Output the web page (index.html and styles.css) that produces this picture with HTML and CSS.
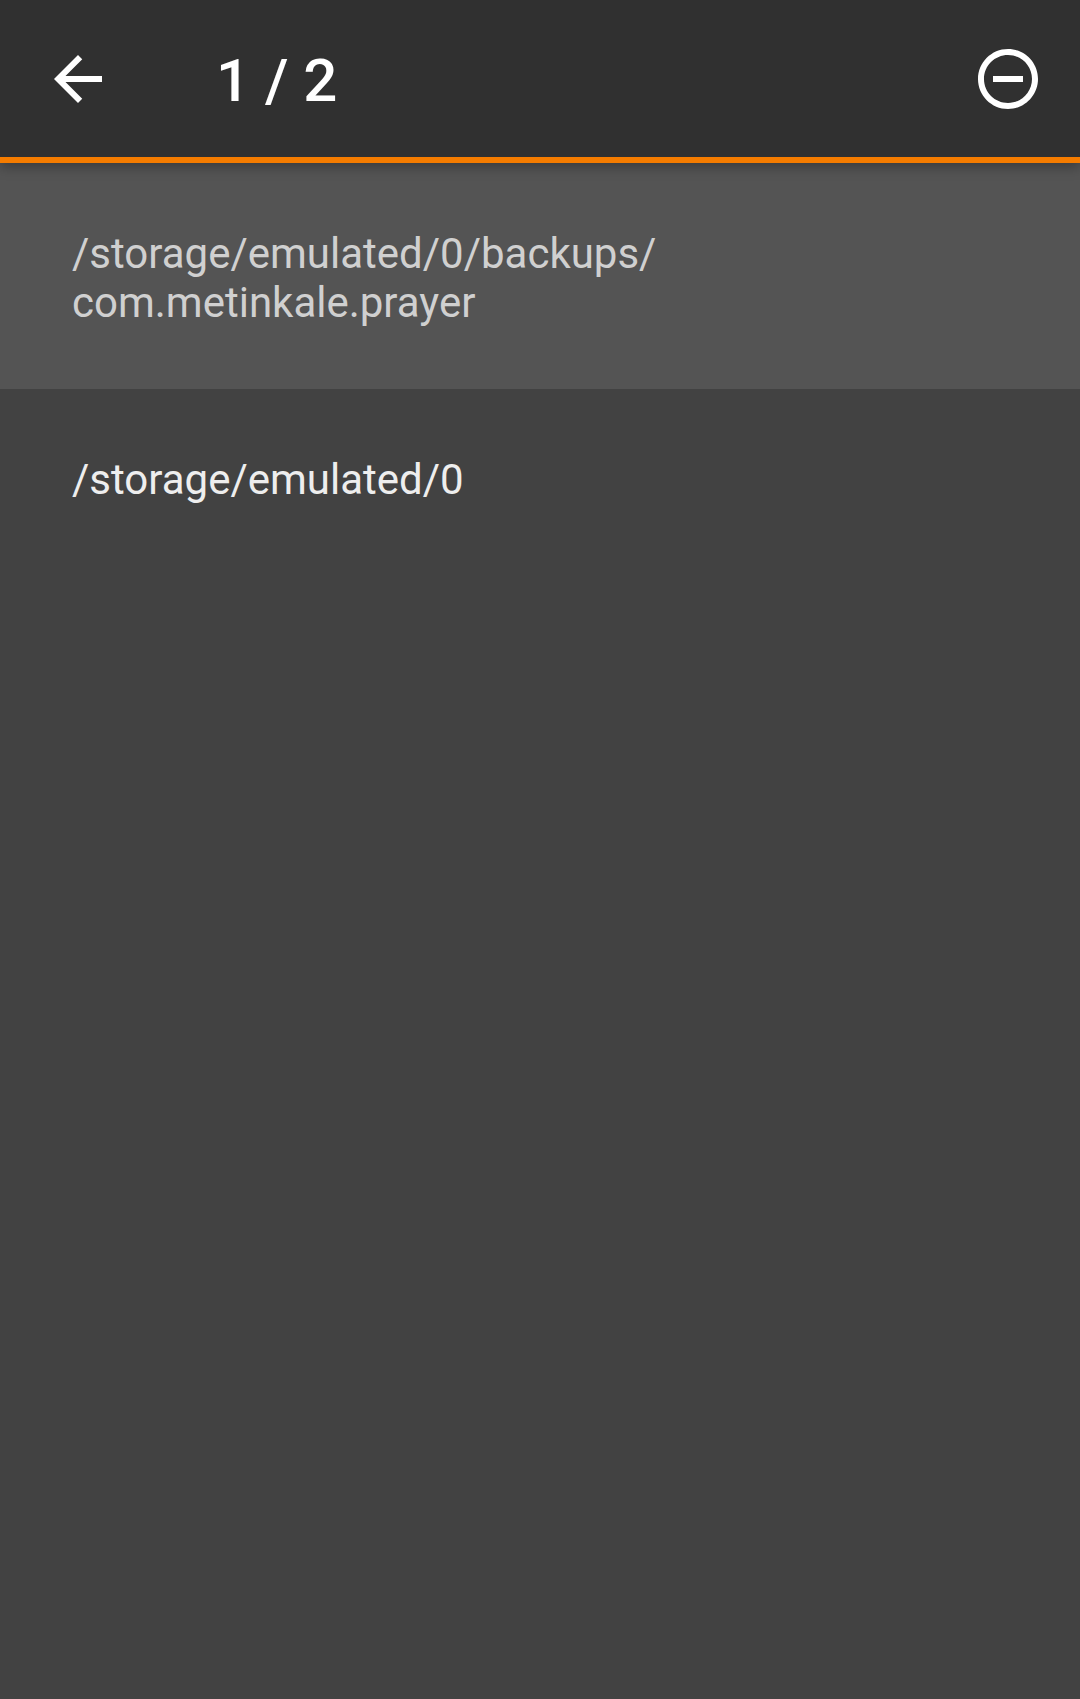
FILE: index.html
```html
<!DOCTYPE html>
<html lang="en">
<head>
<meta charset="utf-8">
<meta name="viewport" content="width=device-width, initial-scale=1">
<title>Folders</title>
<link rel="stylesheet" href="styles.css">
</head>
<body>
<header class="toolbar">
  <button class="icon-button" type="button" aria-label="Back">
    <svg class="icon" viewBox="0 0 24 24" aria-hidden="true"><path d="M20 11H7.830l5.590-5.590L12 4l-8 8 8 8 1.410-1.410L7.830 13H20v-2z"/></svg>
  </button>
  <h1 class="title">1 / 2</h1>
  <button class="icon-button" type="button" aria-label="Remove">
    <svg class="icon" viewBox="0 0 24 24" aria-hidden="true"><path d="M7 11v2h10v-2H7zm5-9C6.480 2 2 6.480 2 12s4.480 10 10 10 10-4.480 10-10S17.520 2 12 2zm0 18c-4.410 0-8-3.590-8-8s3.590-8 8-8 8 3.590 8 8-3.590 8-8 8z"/></svg>
  </button>
</header>
<main>
  <ul class="folders">
    <li class="folder folder-selected">/storage/emulated/0/backups/<wbr>com.metinkale.prayer</li>
    <li class="folder">/storage/emulated/0</li>
  </ul>
</main>
</body>
</html>
```

FILE: styles.css
```css
* {
  box-sizing: border-box;
}

body {
  margin: 0;
  min-height: 100vh;
  background: #424242;
  color: #eee;
  font-family: Roboto, sans-serif;
}

.toolbar {
  position: relative;
  display: flex;
  align-items: center;
  height: 163px;
  padding: 0 36px 0 42px;
  border-bottom: 6px solid #f57c00;
  background: #303030;
  color: #fff;
  box-shadow: 0 4px 12px rgba(0, 0, 0, 0.3);
}

.icon-button {
  display: flex;
  padding: 0;
  border: 0;
  background: none;
  color: inherit;
  cursor: pointer;
}

.icon {
  width: 72px;
  height: 72px;
  fill: currentColor;
}

.title {
  flex: 1;
  margin: 0 0 0 102px;
  padding-top: 4px;
  font-size: 60px;
  font-weight: 500;
  line-height: 72px;
}

.folders {
  margin: 0;
  padding: 0;
  list-style: none;
}

.folder {
  padding: 66px 72px 62px;
  font-size: 42px;
  line-height: 49px;
}

.folder-selected {
  background: #545454;
  color: #d0d0d0;
}
```
